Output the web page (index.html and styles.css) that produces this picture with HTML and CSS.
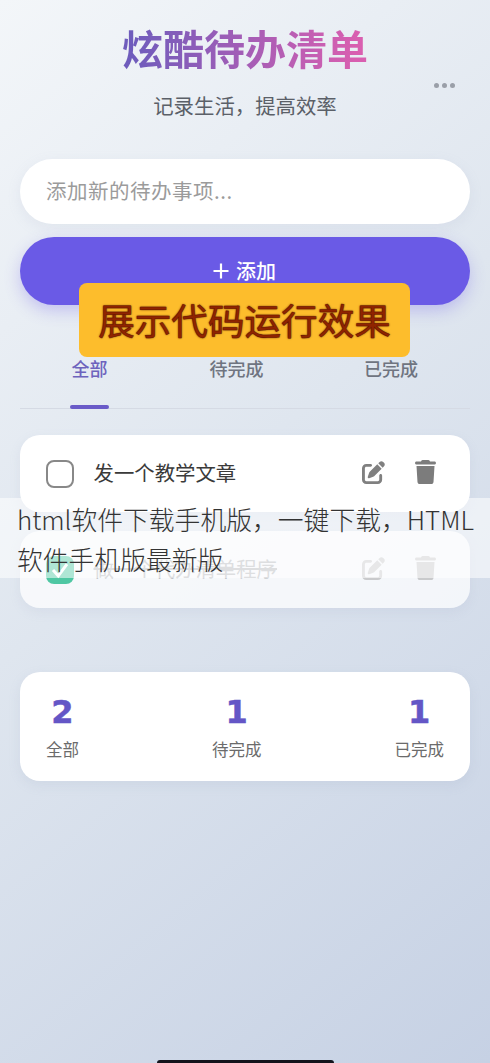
FILE: index.html
```html
<!DOCTYPE html>
<html lang="zh">
<head>
<meta charset="utf-8">
<title>炫酷待办清单</title>
<link rel="stylesheet" href="styles.css">
</head>
<body>
<div class="app">
  <header class="header">
    <h1 class="title">炫酷待办清单</h1>
    <p class="subtitle">记录生活，提高效率</p>
    <div class="dots"><i></i><i></i><i></i></div>
  </header>
  <div class="input">添加新的待办事项...</div>
  <div class="add"><svg class="plus" viewBox="0 0 16 16"><path d="M8 0.5v15M0.5 8h15"/></svg>添加</div>
  <nav class="tabs">
    <span class="tab active">全部</span>
    <span class="tab">待完成</span>
    <span class="tab">已完成</span>
  </nav>
  <ul class="list">
    <li class="item">
      <span class="check"></span>
      <span class="text">发一个教学文章</span>
      <svg class="edit" viewBox="0 0 512 512"><path d="M471.6 21.7c-21.9-21.9-57.3-21.9-79.2 0L362.3 51.7l97.9 97.9 30.1-30.1c21.9-21.9 21.9-57.3 0-79.2L471.6 21.7zm-299.2 220c-6.1 6.1-10.8 13.6-13.5 21.9l-29.6 88.8c-2.9 8.6-.6 18.1 5.8 24.6s15.9 8.7 24.6 5.8l88.8-29.6c8.2-2.7 15.7-7.4 21.9-13.5L437.7 172.3 339.7 74.3 172.4 241.7zM96 64C43 64 0 107 0 160V416c0 53 43 96 96 96H352c53 0 96-43 96-96V320c0-17.7-14.3-32-32-32s-32 14.3-32 32v96c0 17.7-14.3 32-32 32H96c-17.7 0-32-14.3-32-32V160c0-17.7 14.3-32 32-32h96c17.7 0 32-14.3 32-32s-14.3-32-32-32H96z"/></svg>
      <svg class="trash" viewBox="0 0 448 512" preserveAspectRatio="none"><path d="M135.2 17.7L128 32H32C14.3 32 0 46.3 0 64S14.3 96 32 96H416c17.7 0 32-14.3 32-32s-14.3-32-32-32H320l-7.2-14.3C307.4 6.8 296.3 0 284.2 0H163.8c-12.1 0-23.2 6.8-28.6 17.7zM416 128H32L53.2 467c1.6 25.3 22.6 45 47.9 45H346.9c25.3 0 46.3-19.7 47.9-45L416 128z"/></svg>
    </li>
    <li class="item done">
      <span class="check on"><svg viewBox="0 0 24 24"><path d="M6 12l4.5 5L18 7"/></svg></span>
      <span class="text">做一个代办清单程序</span>
      <svg class="edit" viewBox="0 0 512 512"><path d="M471.6 21.7c-21.9-21.9-57.3-21.9-79.2 0L362.3 51.7l97.9 97.9 30.1-30.1c21.9-21.9 21.9-57.3 0-79.2L471.6 21.7zm-299.2 220c-6.1 6.1-10.8 13.6-13.5 21.9l-29.6 88.8c-2.9 8.6-.6 18.1 5.8 24.6s15.9 8.7 24.6 5.8l88.8-29.6c8.2-2.7 15.7-7.4 21.9-13.5L437.7 172.3 339.7 74.3 172.4 241.7zM96 64C43 64 0 107 0 160V416c0 53 43 96 96 96H352c53 0 96-43 96-96V320c0-17.7-14.3-32-32-32s-32 14.3-32 32v96c0 17.7-14.3 32-32 32H96c-17.7 0-32-14.3-32-32V160c0-17.7 14.3-32 32-32h96c17.7 0 32-14.3 32-32s-14.3-32-32-32H96z"/></svg>
      <svg class="trash" viewBox="0 0 448 512" preserveAspectRatio="none"><path d="M135.2 17.7L128 32H32C14.3 32 0 46.3 0 64S14.3 96 32 96H416c17.7 0 32-14.3 32-32s-14.3-32-32-32H320l-7.2-14.3C307.4 6.8 296.3 0 284.2 0H163.8c-12.1 0-23.2 6.8-28.6 17.7zM416 128H32L53.2 467c1.6 25.3 22.6 45 47.9 45H346.9c25.3 0 46.3-19.7 47.9-45L416 128z"/></svg>
    </li>
  </ul>
  <section class="stats">
    <div class="stat"><b>2</b><span>全部</span></div>
    <div class="stat"><b>1</b><span>待完成</span></div>
    <div class="stat"><b>1</b><span>已完成</span></div>
  </section>
</div>
<div class="badge">展示代码运行效果</div>
<div class="band">html软件下载手机版，一键下载，HTML软件手机版最新版</div>
<div class="home"></div>
</body>
</html>
```

FILE: styles.css
```css
* { box-sizing: border-box; }
html, body { margin: 0; padding: 0; }
body {
  position: relative;
  width: 490px;
  height: 1063px;
  overflow: hidden;
  background: linear-gradient(140deg, #f3f6f9 0%, #dfe6ef 45%, #c6d1e4 100%);
  font-family: "Noto Sans CJK SC", "Noto Sans", sans-serif;
}
.app { padding: 0 20px; }
.header { position: relative; height: 159px; padding-top: 18px; text-align: center; }
.title {
  margin: 0;
  height: 58px;
  font-size: 41px;
  line-height: 58px;
  font-weight: 700;
  background: linear-gradient(90deg, #6f5cbc 25%, #d95fb0 75%);
  -webkit-background-clip: text;
  background-clip: text;
  color: transparent;
}
.subtitle { margin: 14px 0 0; font-size: 20.4px; line-height: 30px; font-weight: 400; color: #5b6068; }
.dots { position: absolute; top: 83px; right: 15px; display: flex; gap: 3px; }
.dots i { width: 5px; height: 5px; border-radius: 50%; background: #9a9fa8; }
.input {
  height: 65px;
  padding-left: 26px;
  border-radius: 33px;
  background: #fff;
  font-size: 20.5px;
  letter-spacing: .5px;
  line-height: 63px;
  color: #9b9b9b;
  box-shadow: 0 4px 14px rgba(150, 160, 190, .12);
}
.add {
  margin-top: 13px;
  height: 68px;
  padding-bottom: 1px;
  border-radius: 34px;
  background: #6a5ae6;
  color: #fff;
  font-size: 20px;
  line-height: 64px;
  font-weight: 500;
  display: flex;
  justify-content: center;
  align-items: center;
  gap: 7px;
  box-shadow: 0 6px 16px rgba(108, 92, 231, .3);
}
.plus { width: 16px; height: 16px; margin-left: -1px; fill: none; stroke: #fff; stroke-width: 2.2; }
.tabs {
  margin-top: 42px;
  height: 62px;
  padding: 0 52px 0 50px;
  display: flex;
  justify-content: space-between;
  border-bottom: 1px solid #d5dae4;
}
.tab {
  position: relative;
  height: 61px;
  padding: 6px 0 0;
  font-size: 18px;
  line-height: 30px;
  font-weight: 500;
  color: #6f7480;
}
.tab.active { width: 39px; text-align: center; color: #6d63bd; }
.tab.active::after {
  content: "";
  position: absolute;
  left: 0;
  right: 0;
  bottom: -1px;
  height: 4px;
  border-radius: 2px;
  background: #6a5bc8;
}
.list { list-style: none; margin: 26px 0 0; padding: 0; }
.item {
  height: 77px;
  margin-bottom: 19px;
  padding: 0 34px 0 26px;
  display: flex;
  align-items: center;
  border-radius: 20px;
  background: #fff;
  box-shadow: 0 4px 12px rgba(150, 160, 190, .12);
}
.check {
  flex: none;
  width: 28px;
  height: 28px;
  border: 2px solid #888;
  border-radius: 8px;
  display: flex;
}
.check.on { border: 0; background: #4fc7a3; }
.check svg { width: 28px; height: 28px; fill: none; stroke: #fff; stroke-width: 2.6; }
.text { flex: 1; margin: 0 0 3px 19.5px; font-size: 20.4px; line-height: 28px; color: #3a3a3a; }
.edit { flex: none; width: 23px; height: 23px; margin-bottom: 3px; fill: #808080; }
.trash { flex: none; width: 21px; height: 24px; margin: 0 0 3px 30px; fill: #7c7c7c; }
.done { background: rgba(255, 255, 255, .72); }
.done .text { color: #b4b6ba; text-decoration: line-through; }
.done .edit, .done .trash { fill: #c9cacc; }
.stats {
  margin-top: 64px;
  height: 109px;
  padding: 20px 26px 0;
  display: flex;
  justify-content: space-between;
  border-radius: 20px;
  background: #fff;
  box-shadow: 0 4px 12px rgba(150, 160, 190, .15);
}
.stat { display: flex; flex-direction: column; align-items: center; }
.stat b {
  font-family: "DejaVu Sans", sans-serif;
  font-size: 32px;
  line-height: 40px;
  color: #6456c6;
  -webkit-text-stroke: .5px #6456c6;
}
.stat span { font-size: 16.5px; line-height: 26px; margin-top: 4px; color: #6b6b6b; }
.badge {
  position: absolute;
  left: 79px;
  top: 283px;
  width: 331px;
  height: 74px;
  border-radius: 8px;
  background: #fdbd2c;
  font-size: 36.6px;
  line-height: 74px;
  font-weight: 400;
  text-align: center;
  white-space: nowrap;
  color: #8f2400;
  -webkit-text-stroke: .5px #6a1600;
  text-shadow: 0 0 2px #4a1000;
}
.band {
  position: absolute;
  left: 0;
  top: 498px;
  width: 490px;
  height: 80px;
  padding: 1px 10px 0 17px;
  background: rgba(255, 255, 255, .55);
  font-size: 25.8px;
  line-height: 40px;
  font-weight: 300;
  color: #333;
}
.home {
  position: absolute;
  left: 157px;
  top: 1060px;
  width: 177px;
  height: 6px;
  border-radius: 3px;
  background: #14141c;
}
```
